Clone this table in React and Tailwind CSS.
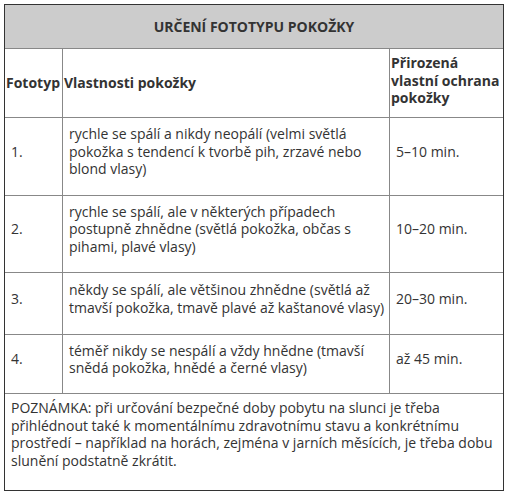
const rows = [
  {
    n: '1.',
    text: 'rychle se spálí a nikdy neopálí (velmi světlá pokožka s tendencí k tvorbě pih, zrzavé nebo blond vlasy)',
    time: '5–10 min.',
    h: 'h-[78px]',
  },
  {
    n: '2.',
    text: 'rychle se spálí, ale v některých případech postupně zhnědne (světlá pokožka, občas s pihami, plavé vlasy)',
    time: '10–20 min.',
    h: 'h-[77px]',
  },
  {
    n: '3.',
    text: 'někdy se spálí, ale většinou zhnědne (světlá až tmavší pokožka, tmavě plavé až kaštanové vlasy)',
    time: '20–30 min.',
    h: 'h-[62px]',
  },
  {
    n: '4.',
    text: 'téměř nikdy se nespálí a vždy hnědne (tmavší snědá pokožka, hnědé a černé vlasy)',
    time: 'až 45 min.',
    h: 'h-[59px]',
  },
];

export default function App() {
  return (
    <div className="bg-white w-[511px] h-[501px] pt-[4px] pl-[4px]">
      <div className="w-[500px] border border-[#333] text-[#333] font-['Open_Sans',sans-serif] text-[14px] leading-[17.5px]">
        {/* title */}
        <div className="h-[44px] bg-[#ccc] border-b border-[#888] flex items-center justify-center font-bold">
          URČENÍ FOTOTYPU POKOŽKY
        </div>

        {/* column headings */}
        <div className="grid grid-cols-[58px_327px_1fr] h-[69px] border-b border-[#888] font-bold">
          <div className="border-r border-[#888] flex items-center pl-[1px]">Fototyp</div>
          <div className="border-r border-[#888] flex items-center pl-[1px]">Vlastnosti pokožky</div>
          <div className="pt-[5px] pl-[1px]">Přirozená vlastní ochrana pokožky</div>
        </div>

        {rows.map((r) => (
          <div
            key={r.n}
            className={`grid grid-cols-[58px_327px_1fr] border-b border-[#888] ${r.h}`}
          >
            <div className="border-r border-[#888] flex items-center px-[6px] pb-[10px]">{r.n}</div>
            <div className="border-r border-[#888] flex items-center pl-[6px] pr-[1px] pb-[10px]">{r.text}</div>
            <div className="flex items-center px-[6px] pb-[10px]">{r.time}</div>
          </div>
        ))}

        {/* note */}
        <div className="h-[96px] px-[6px] pt-[5px]">
          POZNÁMKA: při určování bezpečné doby pobytu na slunci je třeba přihlédnout také k momentálnímu
          zdravotnímu stavu a konkrétnímu prostředí – například na horách, zejména v jarních měsících, je
          třeba dobu slunění podstatně zkrátit.
        </div>
      </div>
    </div>
  );
}
